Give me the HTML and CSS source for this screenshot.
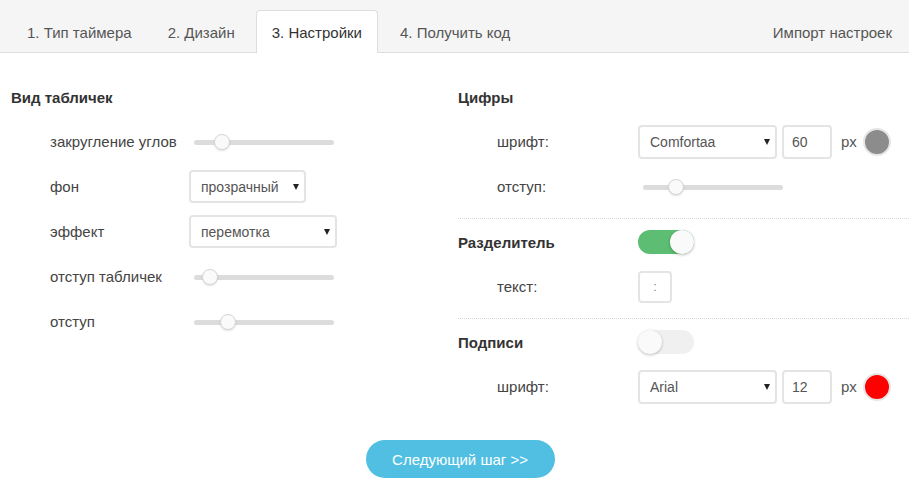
FILE: index.html
```html
<!DOCTYPE html>
<html lang="ru">
<head>
<meta charset="utf-8">
<link rel="stylesheet" href="styles.css">
</head>
<body>
<div class="tabs">
  <div class="tab">1. Тип таймера</div>
  <div class="tab">2. Дизайн</div>
  <div class="tab active">3. Настройки</div>
  <div class="tab">4. Получить код</div>
  <div class="tab import">Импорт настроек</div>
</div>
<div class="main">
  <div class="col left">
    <div class="head">Вид табличек</div>
    <div class="rows">
      <div class="row"><div class="label">закругление углов</div>
        <div class="slider"><div class="track"></div><div class="thumb" style="left:28px"></div></div></div>
      <div class="row"><div class="label">фон</div>
        <div class="select w117">прозрачный<span class="arrow"></span></div></div>
      <div class="row"><div class="label">эффект</div>
        <div class="select w148">перемотка<span class="arrow"></span></div></div>
      <div class="row"><div class="label">отступ табличек</div>
        <div class="slider"><div class="track"></div><div class="thumb" style="left:16px"></div></div></div>
      <div class="row"><div class="label">отступ</div>
        <div class="slider"><div class="track"></div><div class="thumb" style="left:34px"></div></div></div>
    </div>
  </div>
  <div class="col right">
    <div class="head">Цифры</div>
    <div class="rows">
      <div class="row"><div class="label">шрифт:</div>
        <div class="select w139">Comfortaa<span class="arrow"></span></div>
        <div class="num">60</div><span class="px">px</span><span class="swatch gray"></span></div>
      <div class="row"><div class="label">отступ:</div>
        <div class="slider"><div class="track"></div><div class="thumb" style="left:33px"></div></div></div>
    </div>
    <div class="sep"></div>
    <div class="head"><div class="hlabel">Разделитель</div><div class="toggle on"><span class="knob"></span></div></div>
    <div class="rows">
      <div class="row"><div class="label">текст:</div><div class="txt">:</div></div>
    </div>
    <div class="sep"></div>
    <div class="head"><div class="hlabel">Подписи</div><div class="toggle"><span class="knob"></span></div></div>
    <div class="rows">
      <div class="row"><div class="label">шрифт:</div>
        <div class="select w139">Arial<span class="arrow"></span></div>
        <div class="num">12</div><span class="px">px</span><span class="swatch red"></span></div>
    </div>
  </div>
</div>
<div class="footer"><div class="btn">Следующий шаг &gt;&gt;</div></div>
</body>
</html>
```
FILE: styles.css
```css
* { box-sizing: border-box; }
body {
  margin: 0;
  font-family: "Liberation Sans", Arial, sans-serif;
  font-size: 15px;
  color: #444;
  background: #fff;
}
.tabs {
  height: 53px;
  background: #f5f5f5;
  border-bottom: 1px solid #ddd;
  display: flex;
  align-items: flex-end;
  padding-left: 10px;
  padding-right: 16px;
}
.tab {
  height: 42px;
  padding: 0 16px;
  display: flex;
  align-items: center;
  color: #555;
  margin-right: 2px;
  margin-bottom: -1px;
  border: 1px solid transparent;
  border-bottom: none;
  border-radius: 4px 4px 0 0;
}
.tab.active {
  background: #fff;
  border-color: #ddd;
  height: 43px;
  color: #333;
  padding: 0 15px;
  margin: 0 5px -1px 2px;
}
.tab.import {
  margin-left: auto;
  margin-right: 0;
  padding: 0;
}
.main {
  display: grid;
  grid-template-columns: 447px 1fr;
  padding-left: 11px;
  padding-top: 32px;
}
.head {
  height: 24px;
  display: flex;
  align-items: center;
  font-weight: bold;
  color: #333;
}
.hlabel { width: 180px; }
.rows {
  margin-top: 10px;
  padding-left: 39px;
}
.row {
  height: 45px;
  display: flex;
  align-items: center;
}
.left .label { width: 139px; }
.right .label { width: 141px; }
.slider {
  position: relative;
  width: 150px;
  height: 18px;
}
.slider .track {
  position: absolute;
  left: 5px;
  right: 5px;
  top: 7px;
  height: 5px;
  border-radius: 3px;
  background: #dcdcdc;
}
.slider .thumb {
  position: absolute;
  top: 1px;
  width: 16px;
  height: 16px;
  margin-left: -3px;
  border-radius: 50%;
  background: #fafafa;
  border: 1px solid #d6d6d6;
  box-shadow: 0 1px 2px rgba(0,0,0,0.12);
}
.select {
  position: relative;
  height: 33px;
  border: 2px solid #e4e4e4;
  border-radius: 4px;
  padding-left: 10px;
  display: flex;
  align-items: center;
  color: #555;
  background: #fff;
  font-size: 14px;
}
.w117 { width: 117px; }
.w148 { width: 148px; }
.w139 { width: 139px; height: 34px; }
.arrow {
  position: absolute;
  right: 5px;
  top: 50%;
  margin-top: -3px;
  width: 0;
  height: 0;
  border-left: 3.5px solid transparent;
  border-right: 3.5px solid transparent;
  border-top: 6px solid #222;
}
.num {
  width: 50px;
  height: 34px;
  margin-left: 5px;
  border: 2px solid #e4e4e4;
  border-radius: 4px;
  padding-left: 8px;
  display: flex;
  align-items: center;
  color: #555;
  font-size: 14px;
}
.px {
  margin-left: 9px;
  color: #555;
}
.swatch {
  width: 28px;
  height: 28px;
  margin-left: 6px;
  border-radius: 50%;
  border: 2px solid #e6e6e6;
}
.swatch.gray { background: #8c8c8c; }
.swatch.red { background: #ff0000; }
.txt {
  width: 34px;
  height: 32px;
  border: 2px solid #e4e4e4;
  border-radius: 4px;
  display: flex;
  align-items: center;
  justify-content: center;
  color: #888;
  font-size: 13px;
}
.sep {
  border-top: 1px dotted #d8d8d8;
  margin-top: 9px;
  margin-bottom: 11px;
}
.toggle {
  position: relative;
  width: 56px;
  height: 24px;
  border-radius: 12px;
  background: #f0f0f0;
}
.toggle.on { background: #5cbd73; }
.toggle .knob {
  position: absolute;
  top: 0;
  left: 0;
  width: 24px;
  height: 24px;
  border-radius: 50%;
  background: #fafafa;
  box-shadow: 0 1px 3px rgba(0,0,0,0.25);
}
.toggle.on .knob { left: 32px; }
.footer {
  display: flex;
  justify-content: center;
  padding-left: 11px;
  margin-top: 31px;
}
.btn {
  width: 189px;
  height: 38px;
  border-radius: 19px;
  background: #50bfe2;
  color: #fff;
  font-size: 15px;
  display: flex;
  align-items: center;
  justify-content: center;
}
```
